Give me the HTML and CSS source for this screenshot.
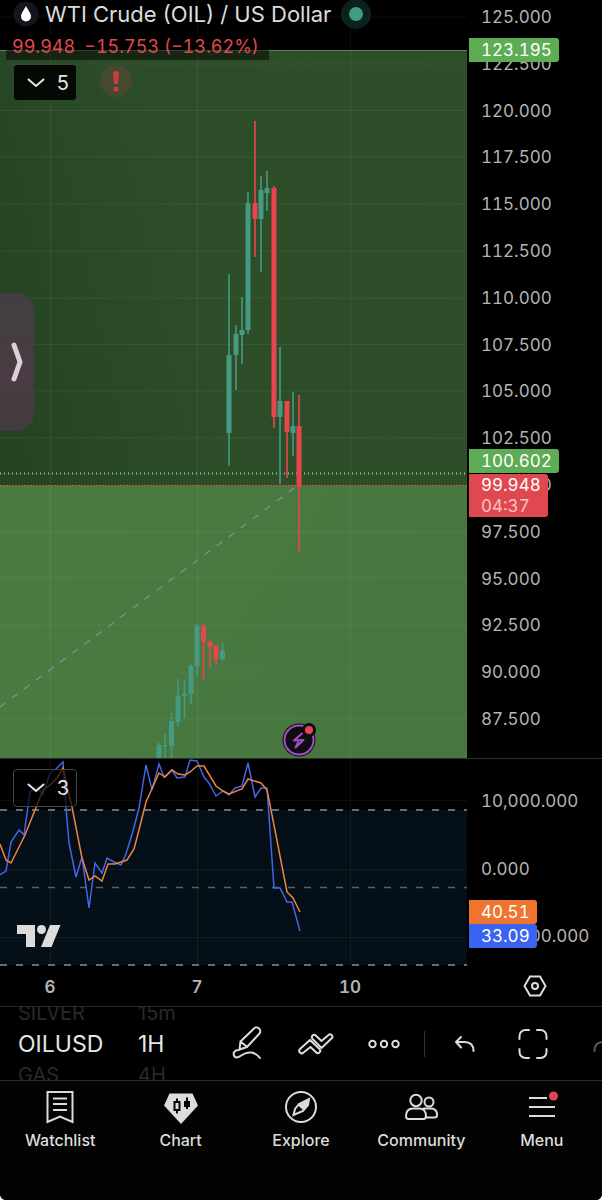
FILE: index.html
```html
<!DOCTYPE html>
<html lang="en">
<head>
  <meta charset="utf-8">
  <meta name="viewport" content="width=device-width, initial-scale=1">
  <title>WTI Crude (OIL) / US Dollar</title>
  <link rel="stylesheet" href="styles.css">
</head>
<body>
  <div class="app">
    <main class="chart">
      <section class="pane price-pane">
        <svg class="plot" viewBox="0 0 467 758" aria-hidden="true">
          <defs>
            <linearGradient id="upper" x1="0" y1="0.6" x2="1" y2="0.4">
              <stop offset="0" stop-color="#264424"/>
              <stop offset="0.4" stop-color="#2d4d29"/>
              <stop offset="1" stop-color="#2e4e2a"/>
            </linearGradient>
            <linearGradient id="lower" x1="0" y1="0" x2="1" y2="0.4">
              <stop offset="0" stop-color="#4a7c42"/>
              <stop offset="1" stop-color="#47773e"/>
            </linearGradient>
          </defs>
          <rect y="50" width="467" height="436" fill="url(#upper)"/>
          <rect y="486" width="467" height="272" fill="url(#lower)"/>
          <path class="zone-edge" d="M0 50.500H467"/>
          <path class="grid" d="M50.500 0V758M197.500 0V758M350.500 0V758M0 17H467M0 64H467M0 110.500H467M0 157H467M0 204H467M0 251H467M0 298H467M0 344.500H467M0 391H467M0 438H467M0 531.500H467M0 578H467M0 625H467M0 672H467M0 718.500H467"/>
          <path class="trend" d="M0 707L297 486"/>
          <path class="line-green" d="M0 473.500H467"/>
          <path class="line-red" d="M0 485.500H467"/>
          <!-- rising candles: wicks, then bodies -->
          <path class="wick up" d="M229 274V466M236 325V390M242 297V364M248 192V334M261 176V272M267 171V211M280 347V484M293 392V456M159 743V758M165 734V758M171.500 713V758M178 679V726M184.500 680V718M191 664V704M197 624V677M222.500 643V661"/>
          <path class="body up" d="M229 355V433M236 334V355M242 330V335M248 203V330M261 190V219M267 188V193M280 401V417M293 426V433M159 745V758M165 745V746M171.500 721V746M178 696V722M184.500 694V696M191 666V694M197 626V666M222.500 651V659"/>
          <!-- falling candles -->
          <path class="wick down" d="M255 121V257M274 186V428M287 401V478M299 395V552M203.500 624V680M210 640V668M216 645V665"/>
          <path class="body down" d="M255 203V219M274 188V417M287 401V432M299 426V487M203.500 626V642M210 642V647M216 646V659"/>
        </svg>

        <header class="legend">
          <div class="symbol-row">
            <svg class="symbol-logo" viewBox="0 0 26 26" aria-hidden="true">
              <circle cx="13" cy="13" r="12.500" fill="#14161b"/>
              <path d="M13 5C11 9 8 12 8 15.500a5 5 0 0 0 10 0C18 12 15 9 13 5z" fill="#fff"/>
            </svg>
            <h1 class="symbol-name">WTI Crude (OIL) / US Dollar</h1>
            <span class="market-status"></span>
          </div>
          <p class="quote"><span>99.948</span><span>−15.753 (−13.62%)</span></p>
          <div class="legend-buttons">
            <button class="collapse" type="button">
              <svg class="chevron" viewBox="0 0 18 10" aria-hidden="true"><path d="M1.500 1.500L9 8l7.500-6.500"/></svg>
              5
            </button>
            <button class="warning" type="button" aria-label="Warning">
              <svg viewBox="0 0 32 32" aria-hidden="true"><path d="M13 9a3 3 0 0 1 6 0l-1 10h-4z"/><circle cx="16" cy="24" r="2.500"/></svg>
            </button>
          </div>
        </header>

        <button class="side-tab" type="button" aria-label="Open side panel">
          <svg viewBox="0 0 12 40" aria-hidden="true"><path d="M3 3l6 17-6 17"/></svg>
        </button>

        <button class="event" type="button" aria-label="Latest event">
          <svg viewBox="0 0 34 34" aria-hidden="true">
            <circle cx="17" cy="17" r="16.500" fill="#100c14"/>
            <circle cx="17" cy="17" r="14.500" fill="none" stroke="#a24fc4" stroke-width="2"/>
            <path d="M20.500 10L12 17.500l9.500-.5L13.500 24.500l3-6" fill="none" stroke="#a24fc4" stroke-width="2" stroke-linejoin="round"/>
            <circle cx="27" cy="7" r="7" fill="#100c14"/>
            <circle cx="27" cy="7" r="4" fill="#e8464e"/>
          </svg>
        </button>
      </section>

      <aside class="scale price-scale">
        <span>125.000</span>
        <span>122.500</span>
        <span>120.000</span>
        <span>117.500</span>
        <span>115.000</span>
        <span>112.500</span>
        <span>110.000</span>
        <span>107.500</span>
        <span>105.000</span>
        <span>102.500</span>
        <span>100.000</span>
        <span>97.500</span>
        <span>95.000</span>
        <span>92.500</span>
        <span>90.000</span>
        <span>87.500</span>
        <div class="tag tag-target">123.195</div>
        <div class="tag tag-entry">100.602</div>
        <div class="tag tag-last">99.948<small>04:37</small></div>
      </aside>

      <section class="pane osc-pane">
        <svg class="plot" viewBox="0 0 467 207" aria-hidden="true">
          <rect y="51" width="467" height="155" fill="#040f17"/>
          <path class="grid" d="M50.500 0V207M197.500 0V207M350.500 0V207M0 41.500H467M0 110.500H467M0 178.500H467"/>
          <path class="band" d="M0 51H467M0 206H467"/>
          <path class="band mid" d="M0 128.500H467"/>
          <polyline class="osc k" points="0,116 6,112 11,83 19,71 24,76 30,33 37,28 43,36 50,14 56,10 63,3 66,49 69,84 76,118 82,98 89,149 95,104 102,114 107,99 114,103 121,106 126,95 133,72 139,49 146,6 152,31 159,5 164,18 172,11 177,19 185,18 190,1 197,2 204,18 209,24 216,37 223,32 229,36 235,29 242,27 248,4 255,38 261,29 267,29 274,129 280,129 287,143 292,143 300,172"/>
          <polyline class="osc d" points="0,85 6,101 11,104 25,76 37,46 43,31 50,26 57,19 63,9 69,36 72,48 82,99 89,121 95,117 102,122 108,105 115,105 127,101 134,90 139,71 146,43 159,14 165,18 172,11 178,15 185,16 190,13 197,7 204,7 216,27 223,32 229,35 242,30 248,20 261,24 267,31 273,61 287,133 293,139 300,153"/>
        </svg>
        <button class="collapse outlined" type="button">
          <svg class="chevron" viewBox="0 0 18 10" aria-hidden="true"><path d="M1.500 1.500L9 8l7.500-6.500"/></svg>
          3
        </button>
        <svg class="tv-logo" viewBox="0 0 45 24" aria-hidden="true">
          <path d="M1 1h18v22h-9V10H1z"/>
          <circle cx="25.500" cy="5.500" r="4.500"/>
          <path d="M34 1h10.500L35.500 23H25z"/>
        </svg>
      </section>

      <aside class="scale osc-scale">
        <span>10,000.000</span>
        <span>0.000</span>
        <span>−10,000.000</span>
        <div class="tag tag-d">40.51</div>
        <div class="tag tag-k">33.09</div>
      </aside>

      <div class="time-scale">
        <span>6</span>
        <span>7</span>
        <span>10</span>
      </div>
      <button class="scale-settings" type="button" aria-label="Scale settings">
        <svg viewBox="0 0 24 22" aria-hidden="true"><path d="M7 1.500h10L22.500 11 17 20.500H7L1.500 11z"/><circle cx="12" cy="11" r="3"/></svg>
      </button>
    </main>

    <div class="toolbar">
      <div class="picker picker-symbol">
        <span>SILVER</span>
        <button type="button">OILUSD</button>
        <span>GAS</span>
      </div>
      <div class="picker picker-interval">
        <span>15m</span>
        <button type="button">1H</button>
        <span>4H</span>
      </div>
      <button class="tool" type="button" aria-label="Draw">
        <svg viewBox="0 0 36 36" aria-hidden="true"><path d="M9.500 23.500l1-8L23.500 3a3.600 3.600 0 0 1 6 4.500L17 21zM10.500 15.500l6.500 5.500M9 24c-5 0-6 3-5 5.500 1.500 3.500 5 1.500 8-.5 6-4 13-3.500 18 3"/></svg>
      </button>
      <button class="tool" type="button" aria-label="Indicators">
        <svg viewBox="0 0 36 36" aria-hidden="true"><path d="M2 23l10-9 9.500 9a2.300 2.300 0 0 1-3.500 3.300L12.500 21l-7 5.500A2.300 2.300 0 0 1 2 23z"/><path d="M14.500 13a2.300 2.300 0 0 1 3.500-3.300l5.500 5.300 7-6a2.300 2.300 0 0 1 3.200 3.300L23.500 22z"/></svg>
      </button>
      <button class="tool" type="button" aria-label="More">
        <svg viewBox="0 0 36 36" aria-hidden="true"><circle cx="6.500" cy="18" r="3.200"/><circle cx="18" cy="18" r="3.200"/><circle cx="29.500" cy="18" r="3.200"/></svg>
      </button>
      <span class="divider"></span>
      <button class="tool" type="button" aria-label="Undo">
        <svg viewBox="0 0 36 36" aria-hidden="true"><path d="M14 11l-5 5 5 5.500M9.500 16h8c6 0 9 3 9 9"/></svg>
      </button>
      <button class="tool" type="button" aria-label="Full screen">
        <svg viewBox="0 0 36 36" aria-hidden="true"><path d="M4.500 13V10a6 6 0 0 1 6-6H14M22 4h3.500a6 6 0 0 1 6 6v3M31.500 23v3a6 6 0 0 1-6 6H22M14 32h-3.500a6 6 0 0 1-6-6v-3"/></svg>
      </button>
      <button class="tool faded" type="button" aria-label="Redo">
        <svg viewBox="0 0 36 36" aria-hidden="true"><path d="M22 11l5 5-5 5.500M26.500 16h-6c-6 0-9 3-9 9"/></svg>
      </button>
    </div>

    <nav class="tabs">
      <a href="#watchlist">
        <svg viewBox="0 0 36 36" aria-hidden="true"><path d="M5.500 3h25v30L18 27.500 5.500 33zM11 9.500h14M11 15h14M11 21h14"/></svg>
        Watchlist
      </a>
      <a href="#chart" aria-current="page">
        <svg viewBox="0 0 36 36" aria-hidden="true">
          <path class="solid" d="M6.500 4.500h23L35 16.500 18 35 1 16.500z"/>
          <path class="cut" d="M11.500 13h5v8h-5zM14 9.500V13M14 21v3.500M24 8.500V20"/>
          <path class="cut-body" d="M21 12h6v6h-6z"/>
        </svg>
        Chart
      </a>
      <a href="#explore">
        <svg viewBox="0 0 36 36" aria-hidden="true"><circle cx="18" cy="18" r="15"/><path d="M26 10l-1 6-5 6-9.500 4L12 20l4-5z"/><path class="solid" d="M26 10l-1 6-5 5-5-4.500z"/></svg>
        Explore
      </a>
      <a href="#community">
        <svg viewBox="0 0 36 36" aria-hidden="true"><circle cx="13" cy="11.500" r="5.700"/><circle cx="26" cy="13" r="4.500"/><path d="M3 27c0-5 3-7.500 7-7.500h6.500c4 0 6.500 3 6.500 7.500 0 2-1 3-2.500 3h-15C4 30 3 29 3 27zM22 28.500h9.500c1.500 0 2.500-1 2.500-2.500 0-4-2-6.500-6-6.500h-8"/></svg>
        Community
      </a>
      <a href="#menu">
        <svg viewBox="0 0 36 36" aria-hidden="true"><path d="M5 9h18M5 18h26M5 27h26"/><circle class="badge" cx="29.500" cy="7" r="4.500"/></svg>
        Menu
      </a>
    </nav>
  </div>
</body>
</html>
```
FILE: styles.css
```css
* {
  box-sizing: border-box;
}
html {
  background: #fff;
}
body {
  margin: 0;
  font-family: Inter, "Liberation Sans", sans-serif;
  color: #dcdcdc;
}
button {
  margin: 0;
  padding: 0;
  border: 0;
  background: none;
  color: inherit;
  font: inherit;
}
svg {
  display: block;
}
.app {
  display: flex;
  flex-direction: column;
  min-height: 100vh;
  background: #000;
  border-radius: 0 0 6px 6px;
  overflow: hidden;
}

/* chart */
.chart {
  display: grid;
  grid-template-columns: 1fr 135px;
}
.pane {
  position: relative;
}
.plot {
  width: 100%;
  height: auto;
}
.osc-pane,
.osc-scale {
  border-top: 1px solid #2e2e2e;
}
.grid {
  stroke: #fff;
  stroke-opacity: 0.06;
}
.zone-edge {
  stroke: #5b8a55;
}
.trend {
  stroke: #8b8a90;
  stroke-width: 1.3;
  stroke-dasharray: 7 8;
}
.line-green {
  stroke: #9bc97c;
  stroke-dasharray: 1 3;
  stroke-width: 2;
}
.line-red {
  stroke: #d8574e;
  stroke-dasharray: 2 1;
}
.wick {
  stroke-width: 1.6;
}
.body {
  stroke-width: 5;
}
.up {
  stroke: #449a82;
}
.down {
  stroke: #e8464e;
}
.band {
  stroke: #8a8f93;
  stroke-width: 1.5;
  stroke-dasharray: 7 9;
}
.mid {
  stroke: #596168;
}
.osc {
  fill: none;
  stroke-width: 1.5;
}
.k {
  stroke: #4365e6;
}
.d {
  stroke: #ee8440;
}

/* legend over the price pane */
.legend {
  position: absolute;
  top: 0;
  left: 0;
}
.symbol-row {
  display: flex;
  align-items: center;
  height: 28px;
  padding-left: 13px;
}
.symbol-logo {
  width: 26px;
  margin-right: 6px;
}
.symbol-name {
  margin: 0;
  font-size: 22px;
  font-weight: 400;
  white-space: nowrap;
}
.market-status {
  width: 30px;
  height: 30px;
  margin-left: 10px;
  border: 8px solid #0b211c;
  border-radius: 50%;
  background: #419b84;
}
.quote {
  display: flex;
  gap: 9px;
  width: max-content;
  margin: 6px 0 0 6px;
  padding: 0 10px 0 6px;
  background: rgba(0, 0, 0, 0.5);
  color: #e0484f;
  font-size: 18px;
  font-variant-numeric: tabular-nums;
  line-height: 26px;
}
.legend-buttons {
  display: flex;
  gap: 24px;
  margin: 5px 0 0 14px;
}
.collapse {
  display: flex;
  align-items: center;
  justify-content: space-between;
  width: 62px;
  height: 35px;
  padding: 0 7px 0 13px;
  border-radius: 3px;
  background: rgba(0, 0, 0, 0.88);
  color: #e6e6e6;
  font-size: 20px;
}
.chevron {
  width: 18px;
  fill: none;
  stroke: #e6e6e6;
  stroke-width: 2;
  stroke-linecap: round;
}
.outlined {
  position: absolute;
  top: 10px;
  left: 13px;
  width: 64px;
  height: 38px;
  border: 1px solid #444;
  border-radius: 4px;
  background: rgba(0, 0, 0, 0.7);
}
.warning {
  width: 32px;
  height: 32px;
  border-radius: 50%;
  background: rgba(130, 70, 60, 0.3);
}
.warning svg {
  fill: #cf3b42;
}
.side-tab {
  display: flex;
  align-items: center;
  justify-content: center;
  position: absolute;
  top: 293px;
  left: 0;
  width: 34px;
  height: 138px;
  border-radius: 0 18px 18px 0;
  background: linear-gradient(#413f41, #4a3b43 65%, #413c40);
}
.side-tab svg {
  width: 12px;
  fill: none;
  stroke: #dccfd8;
  stroke-width: 5;
  stroke-linecap: round;
  stroke-linejoin: round;
}
.event {
  position: absolute;
  top: 723px;
  left: 282px;
  width: 34px;
}
.tv-logo {
  position: absolute;
  bottom: 18px;
  left: 16px;
  width: 45px;
  fill: #dcdcdc;
}

/* scales */
.scale {
  display: flex;
  flex-direction: column;
  justify-content: space-between;
  position: relative;
  padding-left: 14px;
  color: #b4b4b4;
  font-size: 17px;
  font-variant-numeric: tabular-nums;
  line-height: 24px;
  white-space: nowrap;
}
.price-scale {
  padding-top: 5px;
  padding-bottom: 27px;
}
.osc-scale {
  padding-top: 30px;
  padding-bottom: 18px;
}
.tag {
  position: absolute;
  left: 2px;
  padding: 0 7px 0 12px;
  border-radius: 0 3px 3px 0;
  color: #fff;
}
.tag-target {
  top: 38px;
  background: #5eac54;
}
.tag-entry {
  top: 449px;
  background: #5eac54;
}
.tag-last {
  top: 474px;
  padding-bottom: 1px;
  background: #e0484f;
  line-height: 22px;
}
.tag small {
  display: block;
  color: #f6c4c4;
  font-size: 17px;
  line-height: 20px;
}
.tag-d {
  top: 141px;
  background: #ee7530;
}
.tag-k {
  top: 165px;
  background: #3a63f2;
}
.time-scale {
  display: grid;
  grid-template-columns: 100fr 194fr 112fr 61fr;
  align-items: center;
  height: 40px;
  padding-top: 2px;
  color: #b4b4b4;
  font-size: 17px;
  font-variant-numeric: tabular-nums;
  font-weight: 600;
  text-align: center;
}
.scale-settings svg {
  width: 24px;
  margin: 0 auto;
  fill: none;
  stroke: #dcdcdc;
  stroke-width: 2;
}

/* toolbar */
.toolbar {
  display: flex;
  align-items: center;
  height: 75px;
  padding-left: 18px;
  border-top: 1px solid #2a2a2a;
  border-bottom: 1px solid #2a2a2a;
  overflow: hidden;
}
.picker {
  display: flex;
  flex: none;
  flex-direction: column;
  align-items: flex-start;
  color: #292929;
  font-size: 20px;
  line-height: 20px;
}
.picker button {
  color: #e6e6e6;
  font-size: 23px;
  line-height: 42px;
}
.picker-symbol {
  width: 120px;
}
.picker-interval {
  width: 76px;
}
.tool {
  flex: none;
  width: 68px;
}
.tool svg {
  width: 36px;
  margin: 0 auto;
  fill: none;
  stroke: #dcdcdc;
  stroke-width: 2;
  stroke-linecap: round;
  stroke-linejoin: round;
}
.faded {
  opacity: 0.4;
}
.divider {
  flex: none;
  width: 1px;
  height: 26px;
  margin: 0 6px;
  background: #333;
}

/* bottom tabs */
.tabs {
  display: grid;
  flex: 1;
  grid-template-columns: repeat(5, 1fr);
  align-content: start;
  min-height: 119px;
  padding-top: 8px;
  background: #030303;
}
.tabs a {
  display: flex;
  flex-direction: column;
  align-items: center;
  gap: 5px;
  color: #dcdcdc;
  font-size: 16px;
  font-weight: 500;
  line-height: 20px;
  text-decoration: none;
}
.tabs svg {
  width: 36px;
  fill: none;
  stroke: #dcdcdc;
  stroke-width: 2;
}
.tabs .solid {
  fill: #dcdcdc;
  stroke: none;
}
.tabs .cut {
  stroke: #030303;
}
.tabs .cut-body {
  fill: #030303;
  stroke: none;
}
.tabs .badge {
  fill: #e0484f;
  stroke: none;
}
```
